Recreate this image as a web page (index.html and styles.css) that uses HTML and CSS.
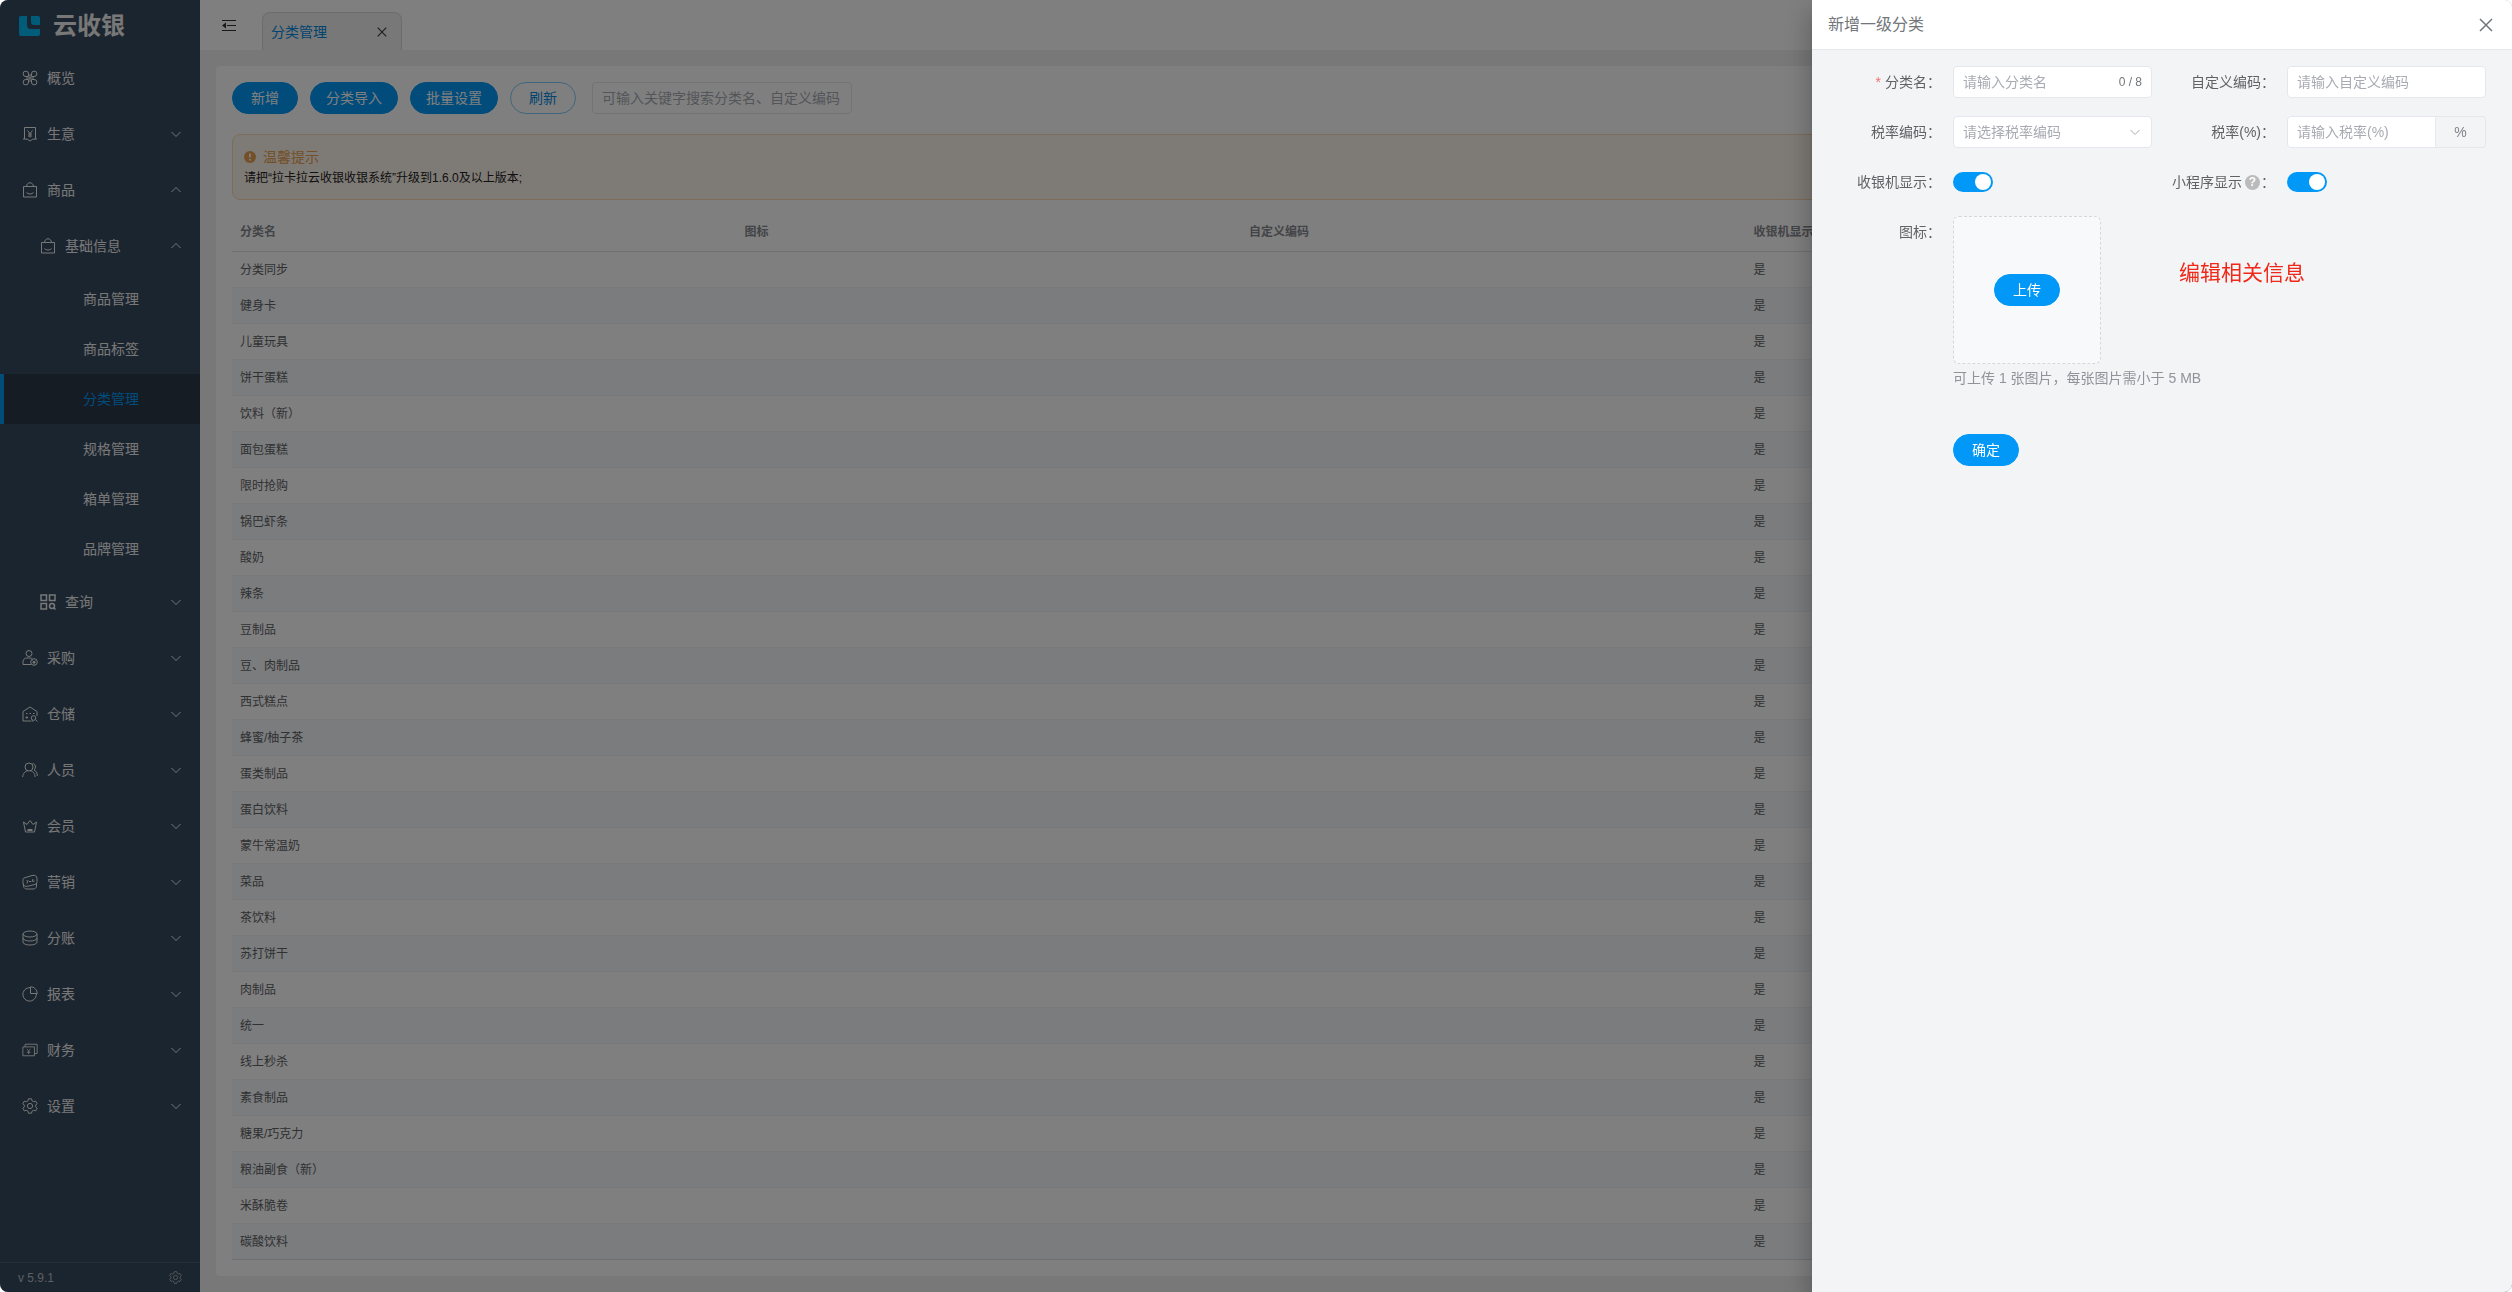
FILE: index.html
```
<!DOCTYPE html>
<html lang="zh-CN">

<head>
    <meta charset="UTF-8">
    <meta name="viewport" content="width=device-width, initial-scale=1.0">
    <title>云收银 - 分类管理</title>
    <link rel="stylesheet" href="styles.css">
</head>

<body>
    <!-- Icon sprite -->
    <svg class="sprite" xmlns="http://www.w3.org/2000/svg">
        <symbol id="i-down" viewBox="0 0 12 12"><path d="M1.5 4l4.5 4.5L10.5 4" /></symbol>
        <symbol id="i-up" viewBox="0 0 12 12"><path d="M1.5 8L6 3.5 10.5 8" /></symbol>
        <symbol id="i-close" viewBox="0 0 14 14"><path d="M1 1l12 12M13 1L1 13" /></symbol>
        <symbol id="i-overview" viewBox="0 0 16 16"><path d="M6.500 6.500H4A2.700 2.700 0 1 1 6.500 4zM9.500 6.500V4A2.700 2.700 0 1 1 12 6.500zM9.500 9.500H12A2.700 2.700 0 1 1 9.500 12zM6.500 9.500V12A2.700 2.700 0 1 1 4 9.500zM8 4v8M4 8h8" /></symbol>
        <symbol id="i-business" viewBox="0 0 16 16"><path d="M2.500 1.500h11v11.500h1.500M2.500 1.500V13H1M2.500 13l3 .3L8 15l2.500-1.700 3-.3M5.500 4.500L8 7.500l2.500-3M8 7.500v4M6 8h4M6 10h4" /></symbol>
        <symbol id="i-goods" viewBox="0 0 16 16"><path d="M1.500 4.500h13v10.500h-13zM4.500 4.500c.3-5 6.700-5 7 0M4.500 10.500c1.500 2 5.500 2 7 0" /></symbol>
        <symbol id="i-query" viewBox="0 0 16 16"><path class="thick" d="M1 1h5.500v5.500H1zM9.500 1H15v5.500H9.500zM1 9.500h5.500V15H1z" /><circle class="thick" cx="12" cy="12" r="2.500" /><path class="thick" d="M13.800 13.800l1.700 1.700" /></symbol>
        <symbol id="i-purchase" viewBox="0 0 16 16"><circle cx="7" cy="3.500" r="3" /><path d="M9 14.500H1V12c0-2.500 1.500-4 4-4h3c1 0 2 .3 2.500 1" /><circle cx="12" cy="12" r="3.300" /><path d="M10.500 10.500L12 12l1.500-1.500M12 12v2.500M10.500 12.500h3" /></symbol>
        <symbol id="i-store" viewBox="0 0 16 16"><path d="M9 15H1V5.500L8 1l7 4.500V10M4 7.500h1.500M7.500 7.500H9M11 7.500h1.500M4 11h1.500v1H4z" /><circle cx="11.500" cy="12" r="2.300" /><path d="M13.300 13.500L15.500 15.500M9.500 15h2" /></symbol>
        <symbol id="i-people" viewBox="0 0 16 16"><circle cx="7" cy="5" r="4" /><path d="M.7 15c.3-3.500 2.300-6 5-6M13 15c0-3.500-2-6-4.500-6M10.500 1.500c3 0 4 4.500 1.500 6.500 2.200 1 3.300 3 3.300 6" /></symbol>
        <symbol id="i-member" viewBox="0 0 16 16"><path d="M3.500 14L1.500 4l3.500 2.500L8 2.500l3 4L14.500 4l-2 10zM5.500 11.500h5M5.500 12.500h5" /></symbol>
        <symbol id="i-marketing" viewBox="0 0 16 16"><path d="M2 4l8-2.500c3-.8 5 .5 5 3v3c0 2-1 2.700-3 3.200l-6 1.500C3 13 1 11.500 1 9V6.500C1 5 1.200 4.400 2 4zM1.500 10v2.500c.5 1.500 1.500 2.500 3.500 2.500h6c2 0 3.500-1 3.500-3V9M5 9.500l1-3M10 8l1-3M4.500 6.500h1M11 7.500l1.500-.5M7 7.500h2" /></symbol>
        <symbol id="i-split" viewBox="0 0 16 16"><ellipse cx="8" cy="4" rx="7" ry="3" /><path d="M1 4v8c0 4 14 4 14 0V4M1 8c0 4 14 4 14 0" /></symbol>
        <symbol id="i-report" viewBox="0 0 16 16"><path d="M6.500 1.800A6.700 6.700 0 1 0 14.200 9.500M8.500.8v6.700h6.700c0-3.700-3-6.700-6.700-6.700zM6.500 1.800L8.500 1.500M14.200 9.500l.5-2" /></symbol>
        <symbol id="i-finance" viewBox="0 0 18 16"><path d="M1 4.500h13v10H1zM3.500 4.500v-3H17v10.500h-3M5.500 7l2 2 2-2M7.500 9v3.500M5.500 10.500h4" /></symbol>
        <symbol id="i-setting" viewBox="0 0 16 16"><path d="M6.500.8h3l.5 2 1.600.9 2-.6 1.500 2.600L13.700 7.100v1.800l1.400 1.400-1.500 2.600-2-.6-1.600.9-.5 2h-3l-.5-2-1.600-.9-2 .6L.9 10.300 2.300 8.900V7.100L.9 5.700l1.500-2.600 2 .6L6 2.800z" /><circle cx="8" cy="8" r="2.600" /></symbol>
    </svg>

    <div class="app">
        <aside class="sidebar">
            <div class="logo">
                <svg class="logo-mark" viewBox="0 0 22 22">
                    <path d="M2 1h6v9q0 4 4 4h9v5q0 2-2 2H2q-2 0-2-2V3q0-2 2-2z" />
                    <path d="M12 1h7q2 0 2 2v7h-6q-3 0-3-3z" />
                </svg>
                <span>云收银</span>
            </div>

            <nav class="menu">
                <a class="menu-item" href="#"><svg class="icon"><use href="#i-overview" /></svg>概览</a>
                <button class="menu-item"><svg class="icon"><use href="#i-business" /></svg>生意<svg class="arrow"><use href="#i-down" /></svg></button>
                <button class="menu-item"><svg class="icon"><use href="#i-goods" /></svg>商品<svg class="arrow"><use href="#i-up" /></svg></button>
                <button class="menu-item level-2"><svg class="icon"><use href="#i-goods" /></svg>基础信息<svg class="arrow"><use href="#i-up" /></svg></button>
                <a class="menu-item level-3" href="#">商品管理</a>
                <a class="menu-item level-3" href="#">商品标签</a>
                <a class="menu-item level-3 active" href="#">分类管理</a>
                <a class="menu-item level-3" href="#">规格管理</a>
                <a class="menu-item level-3" href="#">箱单管理</a>
                <a class="menu-item level-3" href="#">品牌管理</a>
                <button class="menu-item level-2"><svg class="icon"><use href="#i-query" /></svg>查询<svg class="arrow"><use href="#i-down" /></svg></button>
                <button class="menu-item"><svg class="icon"><use href="#i-purchase" /></svg>采购<svg class="arrow"><use href="#i-down" /></svg></button>
                <button class="menu-item"><svg class="icon"><use href="#i-store" /></svg>仓储<svg class="arrow"><use href="#i-down" /></svg></button>
                <button class="menu-item"><svg class="icon"><use href="#i-people" /></svg>人员<svg class="arrow"><use href="#i-down" /></svg></button>
                <button class="menu-item"><svg class="icon"><use href="#i-member" /></svg>会员<svg class="arrow"><use href="#i-down" /></svg></button>
                <button class="menu-item"><svg class="icon"><use href="#i-marketing" /></svg>营销<svg class="arrow"><use href="#i-down" /></svg></button>
                <button class="menu-item"><svg class="icon"><use href="#i-split" /></svg>分账<svg class="arrow"><use href="#i-down" /></svg></button>
                <button class="menu-item"><svg class="icon"><use href="#i-report" /></svg>报表<svg class="arrow"><use href="#i-down" /></svg></button>
                <button class="menu-item"><svg class="icon"><use href="#i-finance" /></svg>财务<svg class="arrow"><use href="#i-down" /></svg></button>
                <button class="menu-item"><svg class="icon"><use href="#i-setting" /></svg>设置<svg class="arrow"><use href="#i-down" /></svg></button>
            </nav>

            <footer class="version">
                <span>v 5.9.1</span>
                <svg><use href="#i-setting" /></svg>
            </footer>
        </aside>

        <div class="main">
            <header class="topbar">
                <button class="fold" aria-label="收起菜单">
                    <svg viewBox="0 0 14 12"><path d="M0 1.500h14M5 6.500h9M0 11.500h14" /><path class="fold-head" d="M0 6.500l4-3v6z" /></svg>
                </button>
                <div class="tab">
                    <a href="#">分类管理</a>
                    <button class="tab-close" aria-label="关闭标签"><svg><use href="#i-close" /></svg></button>
                </div>
            </header>

            <main class="card">
                <div class="toolbar">
                    <button class="btn">新增</button>
                    <button class="btn">分类导入</button>
                    <button class="btn">批量设置</button>
                    <button class="btn plain">刷新</button>
                    <input class="input search" type="text" aria-label="搜索" placeholder="可输入关键字搜索分类名、自定义编码">
                </div>

                <div class="alert">
                    <div class="alert-title">
                        <svg viewBox="0 0 12 12"><circle cx="6" cy="6" r="6" /><path d="M6 2.500v4M6 8v1.500" /></svg>
                        温馨提示
                    </div>
                    <p>请把“拉卡拉云收银收银系统”升级到1.6.0及以上版本;</p>
                </div>

                <table class="table">
                    <colgroup>
                        <col><col><col><col><col class="col-action">
                    </colgroup>
                    <thead>
                        <tr><th>分类名</th><th>图标</th><th>自定义编码</th><th>收银机显示</th><th></th></tr>
                    </thead>
                    <tbody>
                        <tr><td>分类同步</td><td></td><td></td><td>是</td><td></td></tr>
                        <tr><td>健身卡</td><td></td><td></td><td>是</td><td></td></tr>
                        <tr><td>儿童玩具</td><td></td><td></td><td>是</td><td></td></tr>
                        <tr><td>饼干蛋糕</td><td></td><td></td><td>是</td><td></td></tr>
                        <tr><td>饮料（新）</td><td></td><td></td><td>是</td><td></td></tr>
                        <tr><td>面包蛋糕</td><td></td><td></td><td>是</td><td></td></tr>
                        <tr><td>限时抢购</td><td></td><td></td><td>是</td><td></td></tr>
                        <tr><td>锅巴虾条</td><td></td><td></td><td>是</td><td></td></tr>
                        <tr><td>酸奶</td><td></td><td></td><td>是</td><td></td></tr>
                        <tr><td>辣条</td><td></td><td></td><td>是</td><td></td></tr>
                        <tr><td>豆制品</td><td></td><td></td><td>是</td><td></td></tr>
                        <tr><td>豆、肉制品</td><td></td><td></td><td>是</td><td></td></tr>
                        <tr><td>西式糕点</td><td></td><td></td><td>是</td><td></td></tr>
                        <tr><td>蜂蜜/柚子茶</td><td></td><td></td><td>是</td><td></td></tr>
                        <tr><td>蛋类制品</td><td></td><td></td><td>是</td><td></td></tr>
                        <tr><td>蛋白饮料</td><td></td><td></td><td>是</td><td></td></tr>
                        <tr><td>蒙牛常温奶</td><td></td><td></td><td>是</td><td></td></tr>
                        <tr><td>菜品</td><td></td><td></td><td>是</td><td></td></tr>
                        <tr><td>茶饮料</td><td></td><td></td><td>是</td><td></td></tr>
                        <tr><td>苏打饼干</td><td></td><td></td><td>是</td><td></td></tr>
                        <tr><td>肉制品</td><td></td><td></td><td>是</td><td></td></tr>
                        <tr><td>统一</td><td></td><td></td><td>是</td><td></td></tr>
                        <tr><td>线上秒杀</td><td></td><td></td><td>是</td><td></td></tr>
                        <tr><td>素食制品</td><td></td><td></td><td>是</td><td></td></tr>
                        <tr><td>糖果/巧克力</td><td></td><td></td><td>是</td><td></td></tr>
                        <tr><td>粮油副食（新）</td><td></td><td></td><td>是</td><td></td></tr>
                        <tr><td>米酥脆卷</td><td></td><td></td><td>是</td><td></td></tr>
                        <tr><td>碳酸饮料</td><td></td><td></td><td>是</td><td></td></tr>
                    </tbody>
                </table>
            </main>
        </div>

        <div class="overlay">
            <section class="drawer" role="dialog" aria-labelledby="drawer-title">
                <header class="drawer-header">
                    <h2 id="drawer-title">新增一级分类</h2>
                    <button class="drawer-close" aria-label="关闭"><svg><use href="#i-close" /></svg></button>
                </header>

                <form class="form" onsubmit="return false;">
                    <div class="form-item">
                        <label for="name"><span class="required">*</span>分类名：</label>
                        <div class="field">
                            <input id="name" class="input" type="text" maxlength="8" placeholder="请输入分类名">
                            <span class="count">0 / 8</span>
                        </div>
                    </div>
                    <div class="form-item">
                        <label for="code">自定义编码：</label>
                        <input id="code" class="input" type="text" placeholder="请输入自定义编码">
                    </div>
                    <div class="form-item">
                        <label for="tax-code">税率编码：</label>
                        <div class="field">
                            <select id="tax-code" class="input">
                                <option>请选择税率编码</option>
                            </select>
                            <svg class="caret"><use href="#i-down" /></svg>
                        </div>
                    </div>
                    <div class="form-item">
                        <label for="tax">税率(%)：</label>
                        <div class="input-group">
                            <input id="tax" class="input" type="text" placeholder="请输入税率(%)">
                            <span class="append">%</span>
                        </div>
                    </div>
                    <div class="form-item">
                        <label for="pos-show">收银机显示：</label>
                        <input id="pos-show" class="switch" type="checkbox" checked>
                    </div>
                    <div class="form-item">
                        <label for="mini-show">小程序显示<span class="help">?</span>：</label>
                        <input id="mini-show" class="switch" type="checkbox" checked>
                    </div>
                    <div class="form-item wide">
                        <label for="upload">图标：</label>
                        <div>
                            <div class="upload">
                                <button id="upload" class="btn" type="button">上传</button>
                            </div>
                            <p class="hint">可上传 1 张图片，每张图片需小于 5 MB</p>
                        </div>
                    </div>
                    <div class="form-item wide submit">
                        <button class="btn">确定</button>
                    </div>
                </form>

                <p class="note">编辑相关信息</p>
            </section>
        </div>
    </div>
</body>

</html>
```
FILE: styles.css
```
* {
    box-sizing: border-box;
}

body {
    margin: 0;
    background-color: #fff;
    color: #606266;
    font-family: "Liberation Sans", "Noto Sans CJK SC", sans-serif;
    font-size: 14px;
    line-height: 20px;
}

button,
input,
select {
    font: inherit;
    color: inherit;
}

button {
    border: 0;
    background: none;
    padding: 0;
    cursor: pointer;
}

a {
    color: inherit;
    text-decoration: none;
}

p,
h2 {
    margin: 0;
}

svg {
    fill: none;
    stroke: currentColor;
}

.sprite {
    display: none;
}

.thick {
    stroke-width: 1.5;
}

.app {
    position: relative;
    display: flex;
    min-height: 100vh;
    border-radius: 8px;
    overflow: hidden;
}

/* Sidebar */
.sidebar {
    display: flex;
    flex-direction: column;
    width: 200px;
    flex-shrink: 0;
    background-color: #374a5e;
    color: #f0f0f0;
}

.logo {
    display: flex;
    align-items: center;
    gap: 12px;
    height: 50px;
    padding: 2px 0 0 19px;
    font-size: 24px;
    font-weight: bold;
}

.logo-mark {
    width: 22px;
    height: 22px;
    fill: #00b8f0;
    stroke: none;
}

.menu {
    flex: 1;
}

.menu-item {
    display: flex;
    align-items: center;
    width: 100%;
    height: 56px;
    padding: 0 18px 0 22px;
    text-align: left;
}

.icon {
    width: 16px;
    height: 16px;
    margin-right: 9px;
    flex-shrink: 0;
}

.arrow {
    width: 12px;
    height: 12px;
    margin-left: auto;
}

.level-2 {
    padding-left: 40px;
}

.level-3 {
    height: 50px;
    padding-left: 83px;
}

.menu-item.active {
    background-color: #2b3949;
    border-left: 4px solid #0298f7;
    padding-left: 79px;
    color: #0298f7;
}

.version {
    display: flex;
    align-items: center;
    justify-content: space-between;
    height: 30px;
    padding: 0 18px;
    border-top: 1px solid #4b5c6e;
    color: #b8bec6;
    font-size: 12px;
}

.version svg {
    width: 13px;
    height: 13px;
}

/* Top bar */
.main {
    display: flex;
    flex-direction: column;
    flex: 1;
    min-width: 0;
    background-color: #f0f0f0;
}

.topbar {
    display: flex;
    align-items: flex-end;
    gap: 26px;
    height: 50px;
    padding-left: 22px;
    background-color: #fff;
}

.fold {
    align-self: center;
    height: 12px;
    color: #333;
}

.fold svg {
    display: block;
    width: 14px;
    height: 12px;
}

.fold-head {
    fill: currentColor;
    stroke: none;
}

.tab {
    display: flex;
    align-items: center;
    justify-content: space-between;
    width: 140px;
    height: 38px;
    padding: 0 14px 0 8px;
    border: 1px solid #d8d8d8;
    border-bottom: 0;
    border-radius: 8px 8px 0 0;
    background-color: #f0f0f0;
    color: #0288e0;
}

.tab-close {
    height: 10px;
    color: #333;
}

.tab-close svg {
    display: block;
    width: 10px;
    height: 10px;
    stroke-width: 1.5;
}

/* Content */
.card {
    flex: 1;
    margin: 16px;
    padding: 16px;
    border-radius: 4px;
    background-color: #fff;
}

.toolbar {
    display: flex;
    gap: 12px;
}

.btn {
    min-width: 66px;
    height: 32px;
    padding: 0 15px;
    border: 1px solid #0298f7;
    border-radius: 16px;
    background-color: #0298f7;
    color: #fff;
}

.btn.plain {
    border-color: #80ccfb;
    background-color: #fff;
    color: #0288e0;
}

.input {
    width: 100%;
    height: 32px;
    padding: 0 9px;
    border: 1px solid #e4e7ed;
    border-radius: 4px;
    background-color: #fff;
}

.input::placeholder {
    color: #a8abb2;
}

.search {
    width: 260px;
    margin-left: 4px;
}

.alert {
    margin-top: 20px;
    padding: 11px;
    border: 1px solid #fad8b0;
    border-radius: 8px;
    background-color: #fdf6ec;
    color: #222;
    font-size: 12px;
}

.alert-title {
    display: flex;
    align-items: center;
    gap: 7px;
    height: 22px;
    color: #e6a050;
    font-size: 14px;
}

.alert-title svg {
    width: 12px;
    height: 12px;
    fill: currentColor;
    stroke: none;
}

.alert-title path {
    stroke: #fdf6ec;
    stroke-width: 2;
}

.table {
    width: 100%;
    margin-top: 12px;
    border-collapse: separate;
    border-spacing: 0;
    table-layout: fixed;
    font-size: 12px;
}

.col-action {
    width: 230px;
}

.table th,
.table td {
    height: 36px;
    padding: 0 8px;
    border-bottom: 1px solid #f0f2f6;
    text-align: left;
}

.table th {
    height: 40px;
    border-color: #dcdfe6;
    color: #85888e;
}

.table tr:nth-child(even) td {
    background-color: #f5f8fb;
}

.table tr:last-child td {
    border-color: #dcdfe6;
}

/* Drawer */
.overlay {
    position: fixed;
    inset: 0;
    border-radius: 8px;
    background-color: rgba(0, 0, 0, 0.5);
    overflow: hidden;
}

.drawer {
    position: absolute;
    top: 0;
    right: 0;
    bottom: 0;
    width: 700px;
    background-color: #f2f4f6;
    box-shadow: 0 8px 10px -5px rgba(0, 0, 0, 0.2), 0 16px 24px 2px rgba(0, 0, 0, 0.14), 0 6px 30px 5px rgba(0, 0, 0, 0.12);
}

.drawer-header {
    display: flex;
    align-items: center;
    justify-content: space-between;
    height: 50px;
    padding: 0 19px 0 16px;
    border-bottom: 1px solid #e4e7ed;
    background-color: #fff;
    color: #72767b;
}

.drawer-header h2 {
    font-size: 16px;
    font-weight: normal;
}

.drawer-close {
    height: 14px;
}

.drawer-close svg {
    display: block;
    width: 14px;
    height: 14px;
    stroke-width: 1.5;
}

.form {
    display: grid;
    grid-template-columns: 1fr 1fr;
    row-gap: 18px;
    padding: 16px 26px 16px 6px;
}

.form-item {
    display: grid;
    grid-template-columns: 123px 1fr;
    column-gap: 12px;
    align-items: center;
    min-height: 32px;
}

.form-item.wide {
    grid-column: 1 / 3;
    align-items: start;
}

.form-item label {
    display: flex;
    align-items: center;
    justify-content: flex-end;
    height: 32px;
}

.required {
    margin-right: 4px;
    color: #f56c6c;
}

.field {
    position: relative;
}

.count {
    position: absolute;
    top: 6px;
    right: 10px;
    color: #73767a;
    font-size: 12px;
}

select.input {
    display: block;
    appearance: none;
    color: #a8abb2;
}

.caret {
    position: absolute;
    top: 10px;
    right: 11px;
    width: 12px;
    height: 12px;
    color: #a8abb2;
    pointer-events: none;
}

.input-group {
    display: flex;
}

.input-group .input {
    flex: 1;
    min-width: 0;
    border-radius: 4px 0 0 4px;
}

.append {
    width: 50px;
    border: 1px solid #e4e7ed;
    border-left: 0;
    border-radius: 0 4px 4px 0;
    color: #808388;
    line-height: 30px;
    text-align: center;
}

.switch {
    width: 40px;
    height: 20px;
    margin: 0;
    padding: 2px;
    appearance: none;
    border-radius: 10px;
    background-color: #dcdfe6;
    cursor: pointer;
}

.switch::before {
    content: "";
    display: block;
    width: 16px;
    height: 16px;
    border-radius: 50%;
    background-color: #fff;
}

.switch:checked {
    background-color: #0298f7;
}

.switch:checked::before {
    margin-left: auto;
}

.help {
    width: 15px;
    height: 15px;
    margin: 0 1px 0 3px;
    border-radius: 50%;
    background-color: #bbb;
    color: #fff;
    font-size: 12px;
    font-weight: bold;
    line-height: 15px;
    text-align: center;
}

.upload {
    display: flex;
    align-items: center;
    justify-content: center;
    width: 148px;
    height: 148px;
    border: 1px dashed #d4d7dc;
    border-radius: 6px;
    background-color: #f7f9fb;
}

.hint {
    margin-top: 4px;
    color: #909399;
}

.submit {
    margin-top: 28px;
}

.submit .btn {
    grid-column: 2;
    justify-self: start;
}

/* Annotation over the drawer */
.note {
    position: absolute;
    top: 258px;
    left: 367px;
    color: #f02818;
    font-size: 21px;
    line-height: 30px;
}
```
